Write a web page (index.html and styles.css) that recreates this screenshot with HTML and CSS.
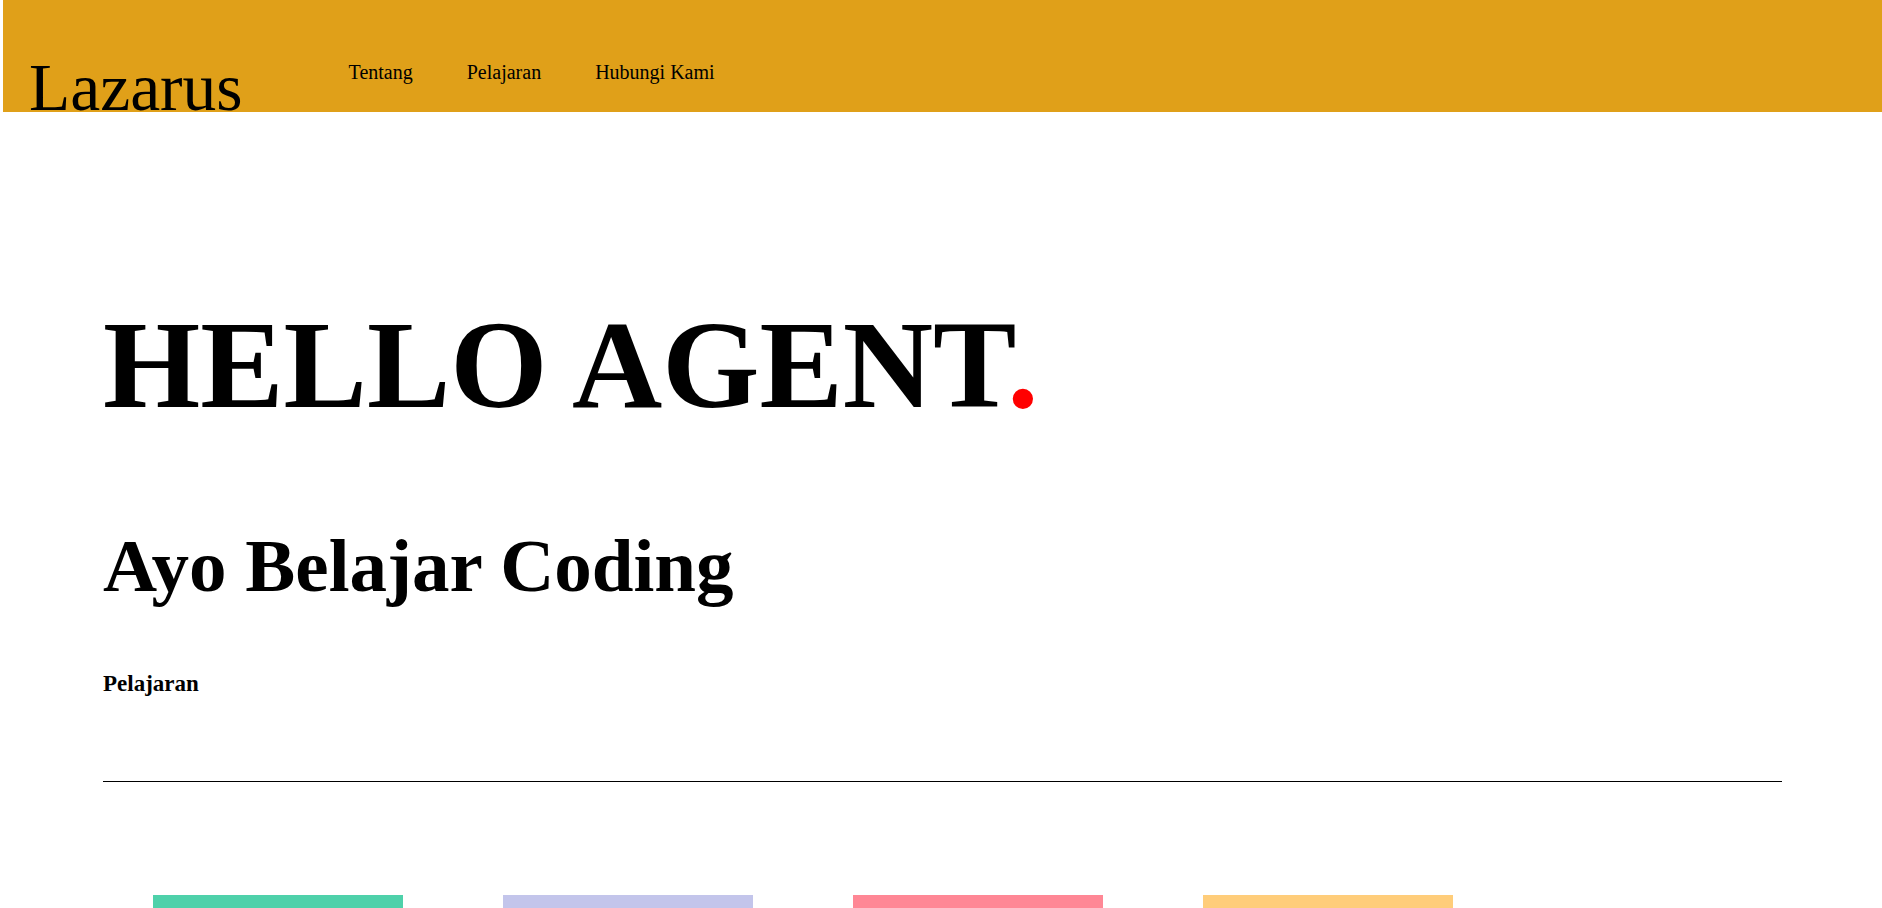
FILE: index.html
```html
<!DOCTYPE html>
<html lang="id">
<head>
<meta charset="utf-8">
<title>Lazarus</title>
<link rel="stylesheet" href="styles.css">
</head>
<body>
<header class="site-header">
  <div class="logo">Lazarus</div>
  <nav class="nav">
    <a href="#tentang">Tentang</a>
    <a href="#pelajaran">Pelajaran</a>
    <a href="#kontak">Hubungi Kami</a>
  </nav>
</header>
<main class="content">
  <h1 class="hero-title">HELLO AGENT<span class="dot">.</span></h1>
  <h2 class="subtitle">Ayo Belajar Coding</h2>
  <h3 class="section-label">Pelajaran</h3>
  <hr class="divider">
  <div class="cards">
    <div class="card card-green"></div>
    <div class="card card-lavender"></div>
    <div class="card card-pink"></div>
    <div class="card card-yellow"></div>
  </div>
</main>
</body>
</html>
```
FILE: styles.css
```css
html, body {
  margin: 0;
  padding: 0;
}
body {
  margin-left: 3px;
  font-family: "Liberation Serif", "Times New Roman", serif;
  color: #000;
  background: #fff;
  overflow: hidden;
}
.site-header {
  display: flex;
  align-items: flex-start;
  height: 112px;
  background: #e0a019;
  padding-left: 26px;
}
.logo {
  font-size: 67.5px;
  line-height: 0.7;
  margin-top: 64px;
}
.nav {
  display: flex;
  gap: 54px;
  margin-left: 106px;
  margin-top: 62px;
}
.nav a {
  font-size: 20px;
  line-height: 1;
  color: #000;
  text-decoration: none;
}
.content {
  padding: 0 100px;
}
.hero-title {
  margin: 191px 0 0;
  font-size: 125px;
  line-height: 1;
  font-weight: bold;
}
.dot {
  color: #ff0000;
}
.subtitle {
  margin: 100px 0 0;
  font-size: 75px;
  line-height: 1;
  font-weight: bold;
}
.section-label {
  margin: 69px 0 0;
  font-size: 23px;
  line-height: 1;
  font-weight: bold;
}
.divider {
  margin: 86px 0 0;
  border: 0;
  border-top: 1px solid #000;
  height: 0;
}
.cards {
  display: flex;
  gap: 100px;
  padding: 0 50px;
  margin-top: 113px;
}
.card {
  width: 250px;
  height: 200px;
}
.card-green { background: #4ed1aa; }
.card-lavender { background: #c3c5eb; }
.card-pink { background: #ff8795; }
.card-yellow { background: #ffcd7a; }
```
